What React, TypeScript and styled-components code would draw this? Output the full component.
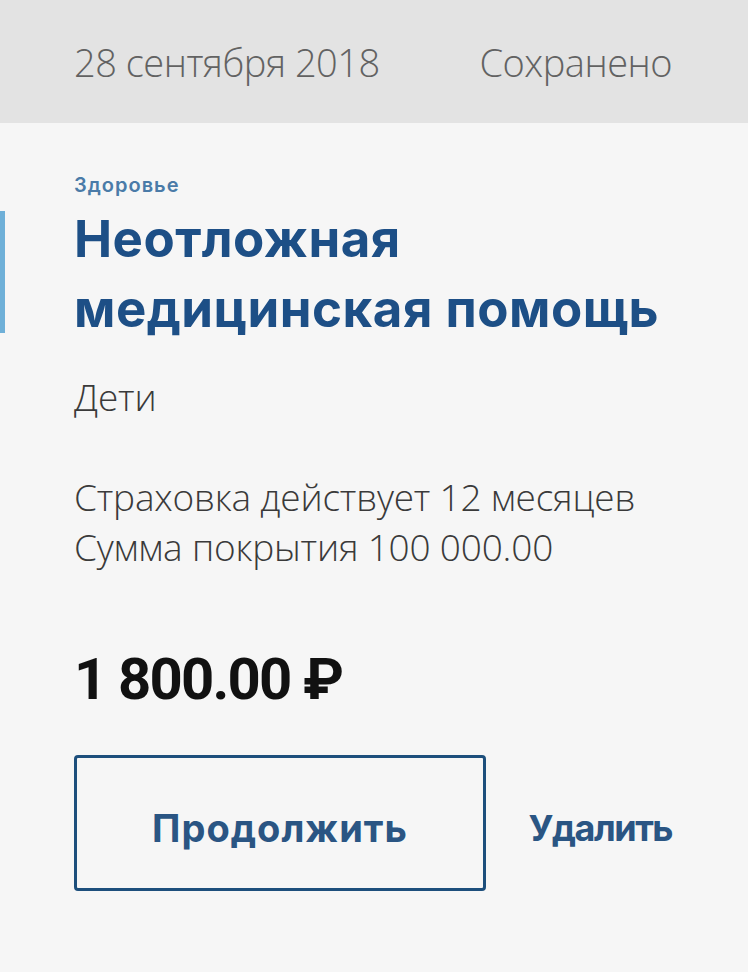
import styled, { createGlobalStyle } from 'styled-components'

const GlobalStyle = createGlobalStyle`
  html, body {
    margin: 0;
    padding: 0;
    background: #f6f6f6;
  }
`

const Page = styled.div`
  width: 748px;
  height: 972px;
  background: #f6f6f6;
  overflow: hidden;
  font-family: "Open Sans", "Noto Sans", sans-serif;
`

const Header = styled.header`
  height: 123px;
  background: #e3e3e3;
  display: flex;
  align-items: center;
  justify-content: space-between;
  padding: 0 76px 0 74px;
  box-sizing: border-box;
`

const HeaderText = styled.span`
  font-family: "Open Sans", sans-serif;
  font-weight: 300;
  font-size: 38px;
  color: #626262;
  letter-spacing: -0.5px;
`

const Card = styled.section`
  position: relative;
  padding: 50px 74px 0 74px;
`

const Marker = styled.div`
  position: absolute;
  left: 0;
  top: 88px;
  width: 5px;
  height: 122px;
  background: #6fb0d8;
`

const Category = styled.div`
  font-family: "Inter", sans-serif;
  font-weight: 600;
  font-size: 20px;
  line-height: 24px;
  color: #4a7ba8;
  letter-spacing: 1px;
`

const Title = styled.h1`
  margin: 7px 0 0;
  font-family: "Inter", sans-serif;
  font-weight: 700;
  font-size: 51px;
  line-height: 70px;
  color: #1d4f86;
  letter-spacing: 0.5px;
`

const Plain = styled.p<{ $gap: number }>`
  margin: ${p => p.$gap}px 0 0;
  font-family: "Open Sans", sans-serif;
  font-weight: 300;
  font-size: 37px;
  line-height: 50px;
  color: #3a3a3a;
  letter-spacing: -0.2px;
`

const Price = styled.div`
  margin-top: 78px;
  font-family: "Roboto", sans-serif;
  font-weight: 700;
  font-size: 58px;
  line-height: 58px;
  color: #111;
  letter-spacing: -1.8px;
`

const Actions = styled.div`
  margin-top: 47px;
  display: flex;
  align-items: center;
`

const MainButton = styled.button`
  width: 412px;
  height: 136px;
  border: 3px solid #1d4f7c;
  border-radius: 4px;
  background: transparent;
  padding: 10px 0 0;
  font-family: "Inter", sans-serif;
  font-weight: 700;
  font-size: 38px;
  letter-spacing: 1px;
  color: #2a5583;
`

const LinkButton = styled.button`
  margin-left: auto;
  margin-right: 2px;
  border: none;
  background: transparent;
  padding: 10px 0 0;
  font-family: "Inter", sans-serif;
  font-weight: 700;
  font-size: 36px;
  letter-spacing: -1.5px;
  color: #2a5583;
`

export default function App() {
  return (
    <Page>
      <GlobalStyle />
      <Header>
        <HeaderText>28 сентября 2018</HeaderText>
        <HeaderText>Сохранено</HeaderText>
      </Header>
      <Card>
        <Marker />
        <Category>Здоровье</Category>
        <Title>
          Неотложная
          <br />
          медицинская помощь
        </Title>
        <Plain $gap={28}>Дети</Plain>
        <Plain $gap={50}>
          Страховка действует 12 месяцев
          <br />
          Сумма покрытия 100 000.00
        </Plain>
        <Price>1 800.00 ₽</Price>
        <Actions>
          <MainButton>Продолжить</MainButton>
          <LinkButton>Удалить</LinkButton>
        </Actions>
      </Card>
    </Page>
  )
}
